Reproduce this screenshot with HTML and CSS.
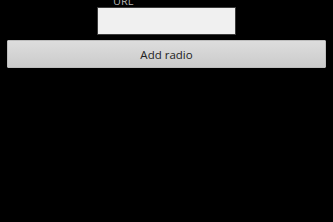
FILE: index.html
```html
<!DOCTYPE html>
<html lang="en">
<head>
    <meta charset="UTF-8">
    <title>Add radio</title>
    <meta name="viewport" content="width=device-width, initial-scale=1">
    <link rel="stylesheet" href="styles.css">
</head>
<body>
    <form class="radio-form" autocomplete="off">
        <div class="field">
            <label for="urlInput">URL</label>
            <input type="text" id="urlInput">
        </div>
        <button type="submit" class="add-btn">Add radio</button>
    </form>
</body>
</html>
```

FILE: styles.css
```css
body {
    margin: 0;
    background: #000;
    font-family: "Open Sans", "Noto Sans", sans-serif;
}
.radio-form {
    display: flex;
    flex-direction: column;
    margin-top: -6px;
    padding: 0 7px;
}
.field {
    display: flex;
    flex-direction: column;
    align-self: center;
    width: 139px;
}
.field label {
    font-size: 11px;
    line-height: 13px;
    color: #b4b4b4;
    padding-left: 16px;
}
.field input {
    box-sizing: border-box;
    height: 28px;
    width: 100%;
    margin: 0;
    border: 1px solid #3c3c3c;
    background: #f0f0f0;
    outline: none;
}
.add-btn {
    margin-top: 5px;
    height: 28px;
    border: 1px solid #bdbdbd;
    border-radius: 1px;
    background: linear-gradient(#dddddd, #cbcbcb);
    color: #222;
    font-family: "Open Sans", "Noto Sans", sans-serif;
    font-size: 11.5px;
    padding: 0;
}
```
